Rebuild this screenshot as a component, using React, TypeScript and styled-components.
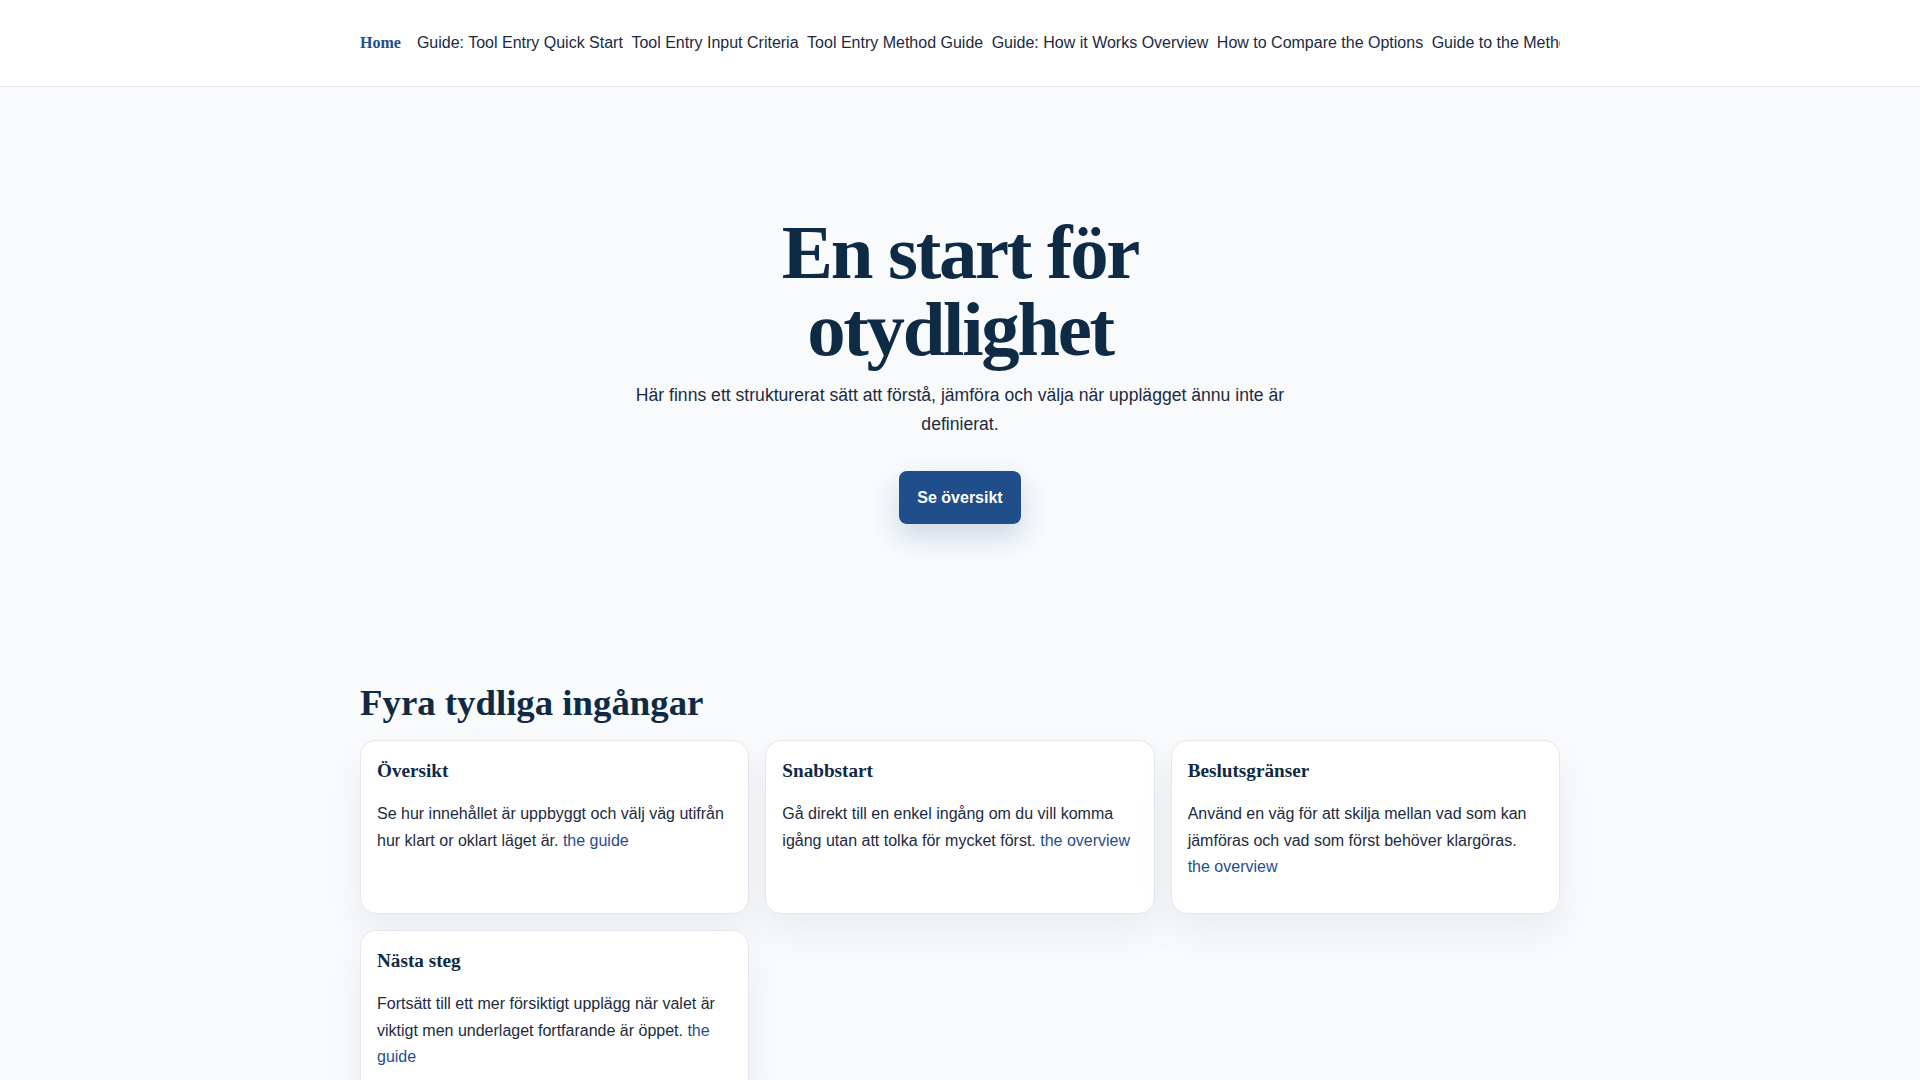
import React from "react";
import styled, { createGlobalStyle } from "styled-components";

const GlobalStyle = createGlobalStyle`
  *, *::before, *::after { box-sizing: border-box; }
  html, body { margin: 0; padding: 0; }
  body {
    background: #f8fafc;
    color: #1c2b40;
    font-family: "Liberation Sans", Arial, sans-serif;
    font-size: 16px;
    line-height: 1.65;
  }
`;

const Header = styled.header`
  background: #ffffff;
  border-bottom: 1px solid #e3e8ee;
`;

const Container = styled.div`
  max-width: 1200px;
  margin: 0 auto;
`;

const HeaderInner = styled(Container)`
  display: flex;
  align-items: center;
  gap: 16px;
  padding: 30px 0;
  overflow: hidden;
`;

const Brand = styled.a`
  font-family: "Liberation Serif", "Times New Roman", serif;
  font-weight: 700;
  font-size: 16px;
  color: #1f4e8c;
  text-decoration: none;
  white-space: nowrap;
  flex: none;
`;

const NavList = styled.nav`
  display: flex;
  gap: 8.5px;
  overflow: hidden;
  white-space: nowrap;
  min-width: 0;
`;

const NavLink = styled.a`
  color: #1b2a41;
  text-decoration: none;
  font-size: 16px;
  flex: none;
`;

const Hero = styled.section`
  padding: 128px 24px 96px;
  text-align: center;
`;

const Title = styled.h1`
  font-family: "Liberation Serif", "Times New Roman", serif;
  font-weight: 700;
  font-size: 76.8px;
  line-height: 1;
  letter-spacing: -0.03em;
  color: #0f2a44;
  margin: 0 auto 12px;
  max-width: 600px;
`;

const Lead = styled.p`
  font-size: 17.6px;
  line-height: 1.65;
  color: #1c2b40;
  max-width: 690px;
  margin: 0 auto;
`;

const PrimaryButton = styled.a`
  display: inline-block;
  margin-top: 32px;
  padding: 13.5px 18.4px;
  background: #1f4e8b;
  color: #ffffff;
  font-weight: 700;
  font-size: 16px;
  line-height: 1.65;
  border-radius: 8px;
  text-decoration: none;
  box-shadow: 0 12px 28px rgba(31, 78, 139, 0.2);
`;

const Section = styled.section`
  padding: 61px 0 64px;
`;

const SectionTitle = styled.h2`
  font-family: "Liberation Serif", "Times New Roman", serif;
  font-weight: 700;
  font-size: 36.8px;
  line-height: 1.2;
  color: #0f2a44;
  margin: 0 0 14px;
`;

const CardGrid = styled.div`
  display: grid;
  grid-template-columns: repeat(auto-fill, minmax(320px, 1fr));
  gap: 16px;
`;

const Card = styled.article`
  background: #ffffff;
  border: 1px solid #e3e8ee;
  border-radius: 16px;
  padding: 16px;
  box-shadow: 0 18px 40px rgba(15, 42, 68, 0.06);
`;

const CardTitle = styled.h3`
  font-family: "Liberation Serif", "Times New Roman", serif;
  font-weight: 700;
  font-size: 19.2px;
  line-height: 1.5;
  color: #0f2a44;
  margin: 0;
`;

const CardText = styled.p`
  margin: 16px 0;
  font-size: 16px;
  line-height: 1.65;
  color: #1c2b40;
`;

const InlineLink = styled.a`
  color: #1f4e8c;
  text-decoration: none;
`;

const navItems = [
  "Guide: Tool Entry Quick Start",
  "Tool Entry Input Criteria",
  "Tool Entry Method Guide",
  "Guide: How it Works Overview",
  "How to Compare the Options",
  "Guide to the Method Choices",
  "Next Steps",
];

const cards = [
  {
    title: "Översikt",
    text: "Se hur innehållet är uppbyggt och välj väg utifrån hur klart or oklart läget är.",
    link: "the guide",
  },
  {
    title: "Snabbstart",
    text: "Gå direkt till en enkel ingång om du vill komma igång utan att tolka för mycket först.",
    link: "the overview",
  },
  {
    title: "Beslutsgränser",
    text: "Använd en väg för att skilja mellan vad som kan jämföras och vad som först behöver klargöras.",
    link: "the overview",
  },
  {
    title: "Nästa steg",
    text: "Fortsätt till ett mer försiktigt upplägg när valet är viktigt men underlaget fortfarande är öppet.",
    link: "the guide",
  },
];

export default function App() {
  return (
    <>
      <GlobalStyle />
      <Header>
        <HeaderInner>
          <Brand href="#">Home</Brand>
          <NavList>
            {navItems.map((item) => (
              <NavLink key={item} href="#">
                {item}
              </NavLink>
            ))}
          </NavList>
        </HeaderInner>
      </Header>
      <main>
        <Hero>
          <Title>En start för otydlighet</Title>
          <Lead>
            Här finns ett strukturerat sätt att förstå, jämföra och välja när upplägget ännu inte är definierat.
          </Lead>
          <PrimaryButton href="#">Se översikt</PrimaryButton>
        </Hero>
        <Section>
          <Container>
            <SectionTitle>Fyra tydliga ingångar</SectionTitle>
            <CardGrid>
              {cards.map((c) => (
                <Card key={c.title}>
                  <CardTitle>{c.title}</CardTitle>
                  <CardText>
                    {c.text} <InlineLink href="#">{c.link}</InlineLink>
                  </CardText>
                </Card>
              ))}
            </CardGrid>
          </Container>
        </Section>
      </main>
    </>
  );
}
